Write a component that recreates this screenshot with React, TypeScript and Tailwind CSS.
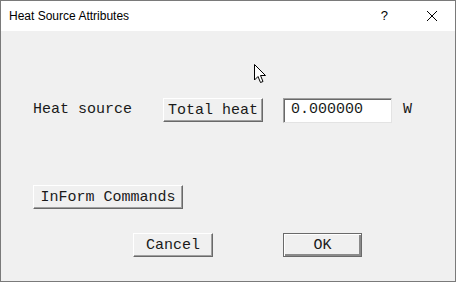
import React from "react";

const mono = { fontFamily: '"Liberation Mono", "DejaVu Sans Mono", monospace' };

function RaisedButton({
  label,
  className = "",
  isDefault = false,
}: {
  label: string;
  className?: string;
  isDefault?: boolean;
}) {
  return (
    <div
      className={`flex h-[24px] items-center justify-center bg-[#f0f0f0] text-[15px] leading-none text-[#1a1a1a] ${
        isDefault
          ? "border border-[#6a6a6a] shadow-[inset_1px_1px_0_#ffffff,inset_-2px_-2px_0_#8a8a8a]"
          : "border border-t-white border-l-white border-r-[#696969] border-b-[#696969] shadow-[inset_-1px_-1px_0_#a0a0a0]"
      } ${className}`}
      style={mono}
    >
      {label}
    </div>
  );
}

export default function App() {
  return (
    <div className="relative flex h-[282px] w-[456px] flex-col border border-[#7a7a7a] bg-[#f0f0f0]">
      {/* title bar */}
      <div className="flex h-[30px] items-center bg-white pl-[8px]" style={{ fontFamily: '"Liberation Sans", "Noto Sans", sans-serif' }}>
        <span className="text-[12px] text-black">Heat Source Attributes</span>
        <span className="ml-auto mr-[38px] text-[13px] text-black">?</span>
        <svg width="12" height="12" viewBox="0 0 12 12" className="mr-[17px]">
          <path d="M1 1 L11 11 M11 1 L1 11" stroke="#000" strokeWidth="1" />
        </svg>
      </div>

      {/* body */}
      <div className="flex flex-1 flex-col pl-[32px]">
        <div className="mt-[67px] flex h-[24px] items-center">
          <span className="w-[130px] text-[15px] text-[#1a1a1a]" style={mono}>
            Heat source
          </span>
          <RaisedButton label="Total heat" className="w-[100px]" />
          <div
            className="ml-[20px] flex h-[25px] w-[109px] items-center border border-t-[#a0a0a0] border-l-[#a0a0a0] border-r-[#e3e3e3] border-b-[#e3e3e3] bg-white pl-[7px] text-[15px] text-[#1a1a1a] shadow-[inset_1px_1px_0_#696969]"
            style={mono}
          >
            0.000000
          </div>
          <span className="ml-[11px] text-[15px] text-[#1a1a1a]" style={mono}>
            W
          </span>
        </div>

        <div className="mt-[63px] flex">
          <RaisedButton label="InForm Commands" className="w-[150px]" />
        </div>

        <div className="mt-[24px] flex">
          <RaisedButton label="Cancel" className="ml-[100px] w-[80px]" />
          <RaisedButton label="OK" isDefault className="ml-[70px] w-[79px]" />
        </div>
      </div>

      {/* mouse pointer */}
      <svg width="13" height="20" viewBox="0 0 13 20" className="absolute left-[253px] top-[63px]">
        <path d="M0.5 0.5 L0.5 16 L4 12.5 L6.5 18.5 L9 17.5 L6.5 11.5 L11.5 11.5 Z" fill="#fff" stroke="#000" strokeWidth="1" />
      </svg>
    </div>
  );
}
